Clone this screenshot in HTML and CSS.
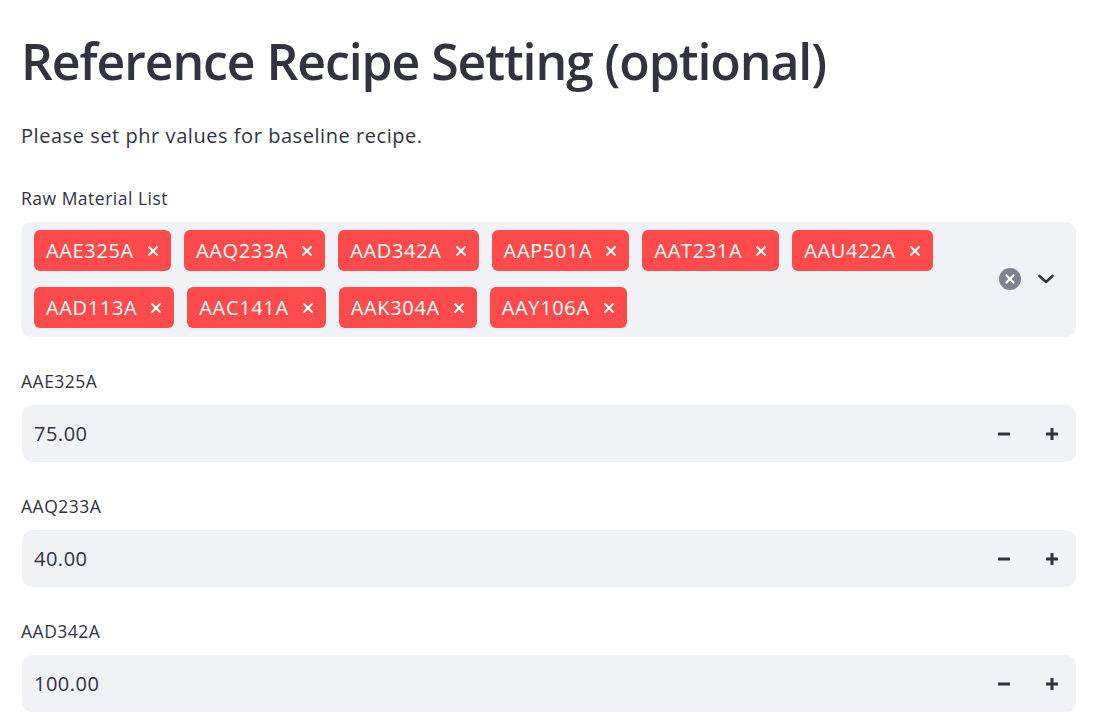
FILE: index.html
```html
<!DOCTYPE html>
<html lang="en">
<head>
<meta charset="utf-8">
<title>Reference Recipe Setting</title>
<link rel="stylesheet" href="styles.css">
</head>
<body>
<main class="main">
  <h1 class="title">Reference Recipe Setting (optional)</h1>
  <p class="desc">Please set phr values for baseline recipe.</p>

  <div class="field field-first">
    <label class="label">Raw Material List</label>
    <div class="select">
      <div class="tags">
        <span class="tag">AAE325A<svg class="x" width="12" height="12" viewBox="0 0 12 12"><path d="M1.5 1.5 L10.5 10.5 M10.5 1.5 L1.5 10.5" stroke="#fff" stroke-width="2"/></svg></span>
        <span class="tag">AAQ233A<svg class="x" width="12" height="12" viewBox="0 0 12 12"><path d="M1.5 1.5 L10.5 10.5 M10.5 1.5 L1.5 10.5" stroke="#fff" stroke-width="2"/></svg></span>
        <span class="tag">AAD342A<svg class="x" width="12" height="12" viewBox="0 0 12 12"><path d="M1.5 1.5 L10.5 10.5 M10.5 1.5 L1.5 10.5" stroke="#fff" stroke-width="2"/></svg></span>
        <span class="tag">AAP501A<svg class="x" width="12" height="12" viewBox="0 0 12 12"><path d="M1.5 1.5 L10.5 10.5 M10.5 1.5 L1.5 10.5" stroke="#fff" stroke-width="2"/></svg></span>
        <span class="tag">AAT231A<svg class="x" width="12" height="12" viewBox="0 0 12 12"><path d="M1.5 1.5 L10.5 10.5 M10.5 1.5 L1.5 10.5" stroke="#fff" stroke-width="2"/></svg></span>
        <span class="tag">AAU422A<svg class="x" width="12" height="12" viewBox="0 0 12 12"><path d="M1.5 1.5 L10.5 10.5 M10.5 1.5 L1.5 10.5" stroke="#fff" stroke-width="2"/></svg></span>
        <span class="tag">AAD113A<svg class="x" width="12" height="12" viewBox="0 0 12 12"><path d="M1.5 1.5 L10.5 10.5 M10.5 1.5 L1.5 10.5" stroke="#fff" stroke-width="2"/></svg></span>
        <span class="tag">AAC141A<svg class="x" width="12" height="12" viewBox="0 0 12 12"><path d="M1.5 1.5 L10.5 10.5 M10.5 1.5 L1.5 10.5" stroke="#fff" stroke-width="2"/></svg></span>
        <span class="tag">AAK304A<svg class="x" width="12" height="12" viewBox="0 0 12 12"><path d="M1.5 1.5 L10.5 10.5 M10.5 1.5 L1.5 10.5" stroke="#fff" stroke-width="2"/></svg></span>
        <span class="tag">AAY106A<svg class="x" width="12" height="12" viewBox="0 0 12 12"><path d="M1.5 1.5 L10.5 10.5 M10.5 1.5 L1.5 10.5" stroke="#fff" stroke-width="2"/></svg></span>
      </div>
      <div class="indicators">
        <svg class="clear" width="22" height="22" viewBox="0 0 22 22"><circle cx="11" cy="11" r="11" fill="#80838f"/><path d="M7.5 7.5 L14.5 14.5 M14.5 7.5 L7.5 14.5" stroke="#fff" stroke-width="2.2" stroke-linecap="round"/></svg>
        <svg class="chev" width="18" height="12" viewBox="0 0 18 12"><path d="M2.5 3 L9 9 L15.5 3" fill="none" stroke="#31333f" stroke-width="2.6" stroke-linecap="round" stroke-linejoin="round"/></svg>
      </div>
    </div>
  </div>

  <div class="field">
    <label class="label">AAE325A</label>
    <div class="num">
      <span class="val">75.00</span>
      <span class="btn"><svg width="14" height="14" viewBox="0 0 14 14"><rect x="1" y="5.5" width="12" height="3" fill="#31333f"/></svg></span>
      <span class="btn"><svg width="14" height="14" viewBox="0 0 14 14"><rect x="1" y="5.5" width="12" height="3" fill="#31333f"/><rect x="5.5" y="1" width="3" height="12" fill="#31333f"/></svg></span>
    </div>
  </div>

  <div class="field">
    <label class="label">AAQ233A</label>
    <div class="num">
      <span class="val">40.00</span>
      <span class="btn"><svg width="14" height="14" viewBox="0 0 14 14"><rect x="1" y="5.5" width="12" height="3" fill="#31333f"/></svg></span>
      <span class="btn"><svg width="14" height="14" viewBox="0 0 14 14"><rect x="1" y="5.5" width="12" height="3" fill="#31333f"/><rect x="5.5" y="1" width="3" height="12" fill="#31333f"/></svg></span>
    </div>
  </div>

  <div class="field">
    <label class="label">AAD342A</label>
    <div class="num">
      <span class="val">100.00</span>
      <span class="btn"><svg width="14" height="14" viewBox="0 0 14 14"><rect x="1" y="5.5" width="12" height="3" fill="#31333f"/></svg></span>
      <span class="btn"><svg width="14" height="14" viewBox="0 0 14 14"><rect x="1" y="5.5" width="12" height="3" fill="#31333f"/><rect x="5.5" y="1" width="3" height="12" fill="#31333f"/></svg></span>
    </div>
  </div>
</main>
</body>
</html>
```

FILE: styles.css
```css
html, body {
  margin: 0;
  padding: 0;
  background: #ffffff;
}

body {
  font-family: "Open Sans", "Noto Sans", sans-serif;
  color: #31333f;
  overflow: hidden;
}

.main {
  padding: 28px 22px 0 21px;
}

.title {
  margin: 0;
  font-size: 50px;
  line-height: 66px;
  font-weight: 600;
  letter-spacing: -1.1px;
  white-space: nowrap;
  color: #31333f;
}

.desc {
  margin: 27px 0 0 0;
  font-size: 20px;
  line-height: 30px;
  letter-spacing: 0.55px;
}

.field {
  display: flex;
  flex-direction: column;
  margin-top: 32px;
}

.field-first {
  margin-top: 35px;
}

.label {
  font-size: 17.5px;
  line-height: 24px;
  height: 24px;
  letter-spacing: 0.5px;
  margin-bottom: 12px;
}

.select {
  display: flex;
  align-items: center;
  background: #f0f2f6;
  border-radius: 10px;
  height: 115px;
  box-sizing: border-box;
  padding: 8px 21px 9px 13px;
}

.tags {
  flex: 1;
  display: flex;
  flex-wrap: wrap;
  gap: 16px 13px;
  max-width: 956px;
}

.tag {
  display: inline-flex;
  align-items: center;
  height: 41px;
  padding: 0 12px;
  background: #ff4b4b;
  color: #ffffff;
  border-radius: 6px;
  font-size: 20px;
  letter-spacing: 0.65px;
  box-sizing: border-box;
}

.x {
  margin-left: 13px;
  display: block;
}

.indicators {
  margin-left: auto;
  display: flex;
  align-items: center;
  gap: 16px;
}

.num {
  display: flex;
  align-items: center;
  height: 57px;
  margin-left: 1px;
  background: #f0f2f6;
  border-radius: 10px;
  padding-left: 12px;
}

.val {
  flex: 1;
  font-size: 20px;
  letter-spacing: 0.5px;
}

.btn {
  width: 48px;
  height: 57px;
  display: flex;
  align-items: center;
  justify-content: center;
}
```
